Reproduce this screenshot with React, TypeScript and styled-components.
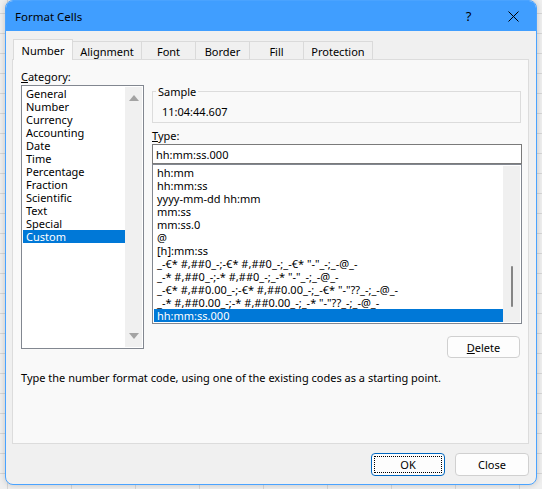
import styled, { createGlobalStyle } from "styled-components";

const GlobalStyle = createGlobalStyle`
  html, body { margin: 0; padding: 0; }
  body {
    font-family: "Segoe UI", "Noto Sans", "Liberation Sans", sans-serif;
    font-size: 11px;
    color: #000;
  }
`;

const Desktop = styled.div`
  width: 542px;
  height: 489px;
  overflow: hidden;
  background-color: #efefef;
  background-image: linear-gradient(#d6d6d6 1px, transparent 1px),
    linear-gradient(90deg, #d6d6d6 1px, transparent 1px);
  background-size: 64px 20px;
  background-position: 7px 13px;
`;

const Dialog = styled.div`
  margin-left: 5px;
  width: 532px;
  height: 485px;
  box-sizing: border-box;
  border: 1px solid #4aa3ff;
  border-radius: 8px;
  overflow: hidden;
  background: #f0f0f0;
  display: flex;
  flex-direction: column;
  box-shadow: 0 0 6px rgba(0, 0, 0, 0.18);
`;

const TitleBar = styled.div`
  height: 30px;
  flex: none;
  background: #409eff;
  display: flex;
  align-items: center;
  padding-left: 9px;
  font-size: 11.5px;
`;

const TitleText = styled.span`
  flex: 1;
`;

const CaptionButton = styled.div`
  width: 45px;
  height: 30px;
  display: flex;
  align-items: center;
  justify-content: center;
  font-size: 13px;
`;

const Body = styled.div`
  flex: 1;
  display: flex;
  flex-direction: column;
  padding: 8px 7px 8px 6px;
`;

const TabStrip = styled.div`
  display: flex;
  align-items: flex-end;
  height: 21px;
  padding-left: 1px;
  margin-bottom: -1px;
  position: relative;
  z-index: 1;
`;

const Tab = styled.div<{ $width: number; $active?: boolean }>`
  width: ${(p) => p.$width}px;
  height: ${(p) => (p.$active ? 21 : 18)}px;
  margin-bottom: ${(p) => (p.$active ? 0 : 1)}px;
  box-sizing: border-box;
  border: 1px solid #dadada;
  border-bottom: none;
  background: ${(p) => (p.$active ? "#f9f9f9" : "#f0f0f0")};
  position: relative;
  z-index: ${(p) => (p.$active ? 2 : 1)};
  display: flex;
  align-items: center;
  justify-content: center;
  padding-top: ${(p) => (p.$active ? 0 : 1)}px;
  & + & {
    margin-left: -1px;
  }
`;

const Panel = styled.div`
  height: 385px;
  box-sizing: border-box;
  border: 1px solid #dcdcdc;
  background: #f9f9f9;
  padding: 10px 6px 0 8px;
  display: flex;
  flex-direction: column;
`;

const Columns = styled.div`
  display: flex;
  gap: 8px;
  align-items: flex-start;
`;

const LeftColumn = styled.div`
  width: 123px;
  display: flex;
  flex-direction: column;
`;

const RightColumn = styled.div`
  width: 370px;
  padding-top: 15px;
  display: flex;
  flex-direction: column;
`;

const FieldLabel = styled.div<{ $top?: number }>`
  line-height: 13px;
  margin-top: ${(p) => p.$top ?? 0}px;
  margin-bottom: 2px;
`;

const ListBox = styled.div<{ $height: number; $border: string }>`
  height: ${(p) => p.$height}px;
  box-sizing: border-box;
  border: 1px solid ${(p) => p.$border};
  background: #fff;
  padding: 1px;
  display: flex;
`;

const Items = styled.div`
  flex: 1;
  display: flex;
  flex-direction: column;
  overflow: hidden;
`;

const Item = styled.div<{ $selected?: boolean }>`
  height: 13px;
  flex: none;
  line-height: 13px;
  padding-left: 3px;
  white-space: nowrap;
  background: ${(p) => (p.$selected ? "#0078d7" : "transparent")};
  color: ${(p) => (p.$selected ? "#fff" : "#000")};
`;

const ScrollBar = styled.div`
  width: 17px;
  flex: none;
  background: #f0f0f0;
  display: flex;
  flex-direction: column;
  align-items: center;
  justify-content: space-between;
  padding: 8px 0;
  box-sizing: border-box;
  position: relative;
`;

const Arrow = styled.div<{ $down?: boolean }>`
  width: 0;
  height: 0;
  border-left: 5px solid transparent;
  border-right: 5px solid transparent;
  ${(p) =>
    p.$down
      ? "border-top: 6px solid #a3a3a3;"
      : "border-bottom: 6px solid #a3a3a3;"}
`;

const Thumb = styled.div`
  position: absolute;
  left: 8px;
  top: 100px;
  width: 2px;
  height: 41px;
  border-radius: 1px;
  background: #858585;
`;

const SampleBox = styled.fieldset`
  margin: 0 1px 0 0;
  padding: 7px 9px 4px;
  border: 1px solid #dcdcdc;
  min-width: 0;
  line-height: 13px;
`;

const SampleLegend = styled.legend`
  padding: 0 2px;
  margin-left: -6px;
  line-height: 13px;
`;

const TypeInput = styled.input`
  height: 20px;
  box-sizing: border-box;
  border: 1px solid #7a7a7a;
  background: #fff;
  padding: 0 3px;
  margin: 0;
  font: inherit;
  color: #000;
  outline: none;
`;

const PushButton = styled.button<{ $width: number; $default?: boolean }>`
  width: ${(p) => p.$width}px;
  height: 23px;
  box-sizing: border-box;
  border: 1px solid ${(p) => (p.$default ? "#0067c0" : "#d0d0d0")};
  border-radius: 4px;
  background: #fdfdfd;
  font: inherit;
  color: #000;
  padding: 0;
  position: relative;
  &::after {
    content: "";
    display: ${(p) => (p.$default ? "block" : "none")};
    position: absolute;
    inset: 2px;
    border: 1px dotted #000;
  }
`;

const DeleteButton = styled(PushButton)`
  height: 22px;
  align-self: flex-end;
  margin-top: 12px;
  margin-right: 2px;
`;

const Description = styled.div`
  margin-top: 13px;
  line-height: 13px;
`;

const Footer = styled.div`
  display: flex;
  justify-content: flex-end;
  gap: 10px;
  margin-top: 9px;
`;

const categories = [
  "General",
  "Number",
  "Currency",
  "Accounting",
  "Date",
  "Time",
  "Percentage",
  "Fraction",
  "Scientific",
  "Text",
  "Special",
  "Custom",
];

const formats = [
  "hh:mm",
  "hh:mm:ss",
  "yyyy-mm-dd hh:mm",
  "mm:ss",
  "mm:ss.0",
  "@",
  "[h]:mm:ss",
  '_-€* #,##0_-;-€* #,##0_-;_-€* "-"_-;_-@_-',
  '_-* #,##0_-;-* #,##0_-;_-* "-"_-;_-@_-',
  '_-€* #,##0.00_-;-€* #,##0.00_-;_-€* "-"??_-;_-@_-',
  '_-* #,##0.00_-;-* #,##0.00_-;_-* "-"??_-;_-@_-',
  "hh:mm:ss.000",
];

const tabs: [string, number][] = [
  ["Number", 60],
  ["Alignment", 70],
  ["Font", 55],
  ["Border", 55],
  ["Fill", 55],
  ["Protection", 70],
];

function App() {
  return (
    <Desktop>
      <GlobalStyle />
      <Dialog>
        <TitleBar>
          <TitleText>Format Cells</TitleText>
          <CaptionButton>?</CaptionButton>
          <CaptionButton>
            <svg width="11" height="11" viewBox="0 0 11 11">
              <path d="M0.5 0.5 L10.5 10.5 M10.5 0.5 L0.5 10.5" stroke="#000" strokeWidth="1" />
            </svg>
          </CaptionButton>
        </TitleBar>
        <Body>
          <TabStrip>
            {tabs.map(([name, w], i) => (
              <Tab key={name} $width={w} $active={i === 0}>
                {name}
              </Tab>
            ))}
          </TabStrip>
          <Panel>
            <Columns>
              <LeftColumn>
                <FieldLabel>
                  <u>C</u>ategory:
                </FieldLabel>
                <ListBox $height={264} $border="#828790">
                  <Items>
                    {categories.map((c) => (
                      <Item key={c} $selected={c === "Custom"}>
                        {c}
                      </Item>
                    ))}
                  </Items>
                  <ScrollBar>
                    <Arrow />
                    <Arrow $down />
                  </ScrollBar>
                </ListBox>
              </LeftColumn>
              <RightColumn>
                <SampleBox>
                  <SampleLegend>Sample</SampleLegend>
                  11:04:44.607
                </SampleBox>
                <FieldLabel $top={6}>
                  <u>T</u>ype:
                </FieldLabel>
                <TypeInput defaultValue="hh:mm:ss.000" readOnly />
                <ListBox $height={160} $border="#828790">
                  <Items>
                    {formats.map((f, i) => (
                      <Item key={i} $selected={i === formats.length - 1}>
                        {f}
                      </Item>
                    ))}
                  </Items>
                  <ScrollBar>
                    <Thumb />
                  </ScrollBar>
                </ListBox>
                <DeleteButton $width={73}>
                  <u>D</u>elete
                </DeleteButton>
              </RightColumn>
            </Columns>
            <Description>
              Type the number format code, using one of the existing codes as a starting point.
            </Description>
          </Panel>
          <Footer>
            <PushButton $width={74} $default>
              OK
            </PushButton>
            <PushButton $width={74}>Close</PushButton>
          </Footer>
        </Body>
      </Dialog>
    </Desktop>
  );
}

export default App;
